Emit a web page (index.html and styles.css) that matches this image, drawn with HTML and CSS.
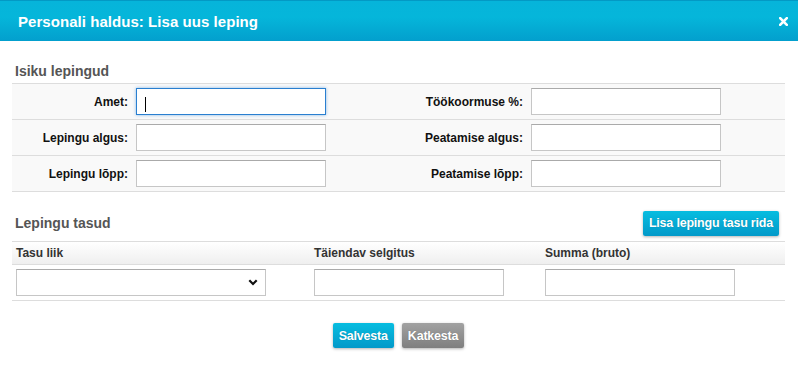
FILE: index.html
```html
<!DOCTYPE html>
<html lang="et">
<head>
<meta charset="utf-8">
<title>Personali haldus</title>
<link rel="stylesheet" href="styles.css">
</head>
<body>
<div class="dialog">
  <div class="titlebar">
    <span class="title">Personali haldus: Lisa uus leping</span>
    <span class="close">
      <svg width="9" height="9" viewBox="0 0 9 9"><path d="M1.2 1.2 L7.8 7.8 M7.8 1.2 L1.2 7.8" stroke="#fff" stroke-width="2.6" stroke-linecap="square"/></svg>
    </span>
  </div>
  <div class="content">
    <h3 class="section-title first">Isiku lepingud</h3>
    <div class="form-grid">
      <div class="frow">
        <label class="lbl">Amet:</label>
        <div class="fcell"><input type="text" class="inp focused"><span class="caret"></span></div>
        <label class="lbl">Töökoormuse %:</label>
        <div class="fcell"><input type="text" class="inp"></div>
      </div>
      <div class="frow">
        <label class="lbl">Lepingu algus:</label>
        <div class="fcell"><input type="text" class="inp"></div>
        <label class="lbl">Peatamise algus:</label>
        <div class="fcell"><input type="text" class="inp"></div>
      </div>
      <div class="frow">
        <label class="lbl">Lepingu lõpp:</label>
        <div class="fcell"><input type="text" class="inp"></div>
        <label class="lbl">Peatamise lõpp:</label>
        <div class="fcell"><input type="text" class="inp"></div>
      </div>
    </div>

    <div class="section-head">
      <h3 class="section-title">Lepingu tasud</h3>
      <button class="btn btn-blue">Lisa lepingu tasu rida</button>
    </div>
    <div class="pay-table">
      <div class="prow phead">
        <div class="pcell">Tasu liik</div>
        <div class="pcell">Täiendav selgitus</div>
        <div class="pcell">Summa (bruto)</div>
      </div>
      <div class="prow">
        <div class="pcell"><div class="select"><svg width="10" height="7" viewBox="0 0 10 7"><path d="M1.3 1.3 L5 5 L8.7 1.3" fill="none" stroke="#111" stroke-width="2.2"/></svg></div></div>
        <div class="pcell"><input type="text" class="inp"></div>
        <div class="pcell"><input type="text" class="inp"></div>
      </div>
    </div>

    <div class="actions">
      <button class="btn btn-blue">Salvesta</button>
      <button class="btn btn-gray">Katkesta</button>
    </div>
  </div>
</div>
</body>
</html>
```

FILE: styles.css
```css
* { box-sizing: border-box; }
html, body { margin: 0; padding: 0; background: #fff; }
body {
  font-family: "Liberation Sans", Arial, sans-serif;
  font-size: 12px;
  color: #111;
  width: 798px;
  height: 376px;
  overflow: hidden;
}
.dialog { width: 798px; }
.titlebar {
  height: 41px;
  background: linear-gradient(#06b4da 0%, #05b6da 40%, #039fcd 100%);
  border-top: 1px solid #0399c4;
  display: flex;
  align-items: center;
  justify-content: space-between;
  padding: 0 10px 0 18px;
}
.title {
  color: #fff;
  font-weight: bold;
  font-size: 15px;
  letter-spacing: 0.05px;
}
.close { display: flex; align-items: center; }
.content { padding: 0 13px 0 12px; }
.section-title {
  margin: 0;
  font-size: 14px;
  line-height: 16px;
  font-weight: bold;
  color: #555;
  padding-left: 3px;
}
.section-title.first { padding-top: 22px; padding-bottom: 4px; }
.form-grid { border-top: 1px solid #ddd; }
.frow {
  display: grid;
  grid-template-columns: 124px 198px 197px 1fr;
  align-items: center;
  height: 36px;
  background: #f9f9f9;
  border-bottom: 1px solid #ddd;
}
.lbl {
  text-align: right;
  padding-right: 8px;
  font-weight: bold;
  color: #111;
}
.fcell { position: relative; display: flex; align-items: center; }
.inp {
  width: 190px;
  height: 27px;
  border: 1px solid #c6c6c6;
  border-top-color: #aaa;
  background: #fff;
  margin: 0;
  padding: 0 6px;
  font: inherit;
  outline: none;
}
.inp.focused {
  border: 1px solid #2a7fd0;
  box-shadow: 0 0 3px rgba(60, 140, 220, 0.6);
}
.caret {
  position: absolute;
  left: 9px;
  top: 9px;
  width: 1px;
  height: 15px;
  background: #000;
}
.section-head {
  display: flex;
  align-items: center;
  justify-content: space-between;
  margin-top: 18px;
  height: 26px;
  padding-right: 6px;
}
.btn {
  font-family: "Liberation Sans", Arial, sans-serif;
  font-weight: bold;
  font-size: 12.5px;
  color: #fff;
  border: none;
  border-radius: 2px;
  height: 25px;
  padding: 0 6px;
  text-shadow: 0 0 1px rgba(0,0,0,0.25);
  box-shadow: 0 1px 3px rgba(0,0,0,0.3);
  letter-spacing: -0.2px;
}
.btn-blue { background: linear-gradient(#07bde0, #0299c9); }
.btn-gray { background: linear-gradient(#a2a2a2, #7f7f7f); }
.pay-table { margin-top: 5px; }
.prow {
  display: grid;
  grid-template-columns: 298px 231px 1fr;
  align-items: center;
  border-bottom: 1px solid #ddd;
}
.phead {
  border-top: 1px solid #ddd;
  height: 24px;
  background: linear-gradient(#fff, #efefef);
  font-weight: bold;
  color: #333;
}
.prow:not(.phead) { height: 36px; }
.pcell { padding-left: 4px; display: flex; align-items: center; }
.select {
  width: 250px;
  height: 27px;
  border: 1px solid #c6c6c6;
  border-top-color: #aaa;
  background: #fff;
  display: flex;
  align-items: center;
  justify-content: flex-end;
  padding-right: 7px;
}
.actions {
  display: flex;
  justify-content: center;
  gap: 8px;
  margin-top: 22px;
}
```
